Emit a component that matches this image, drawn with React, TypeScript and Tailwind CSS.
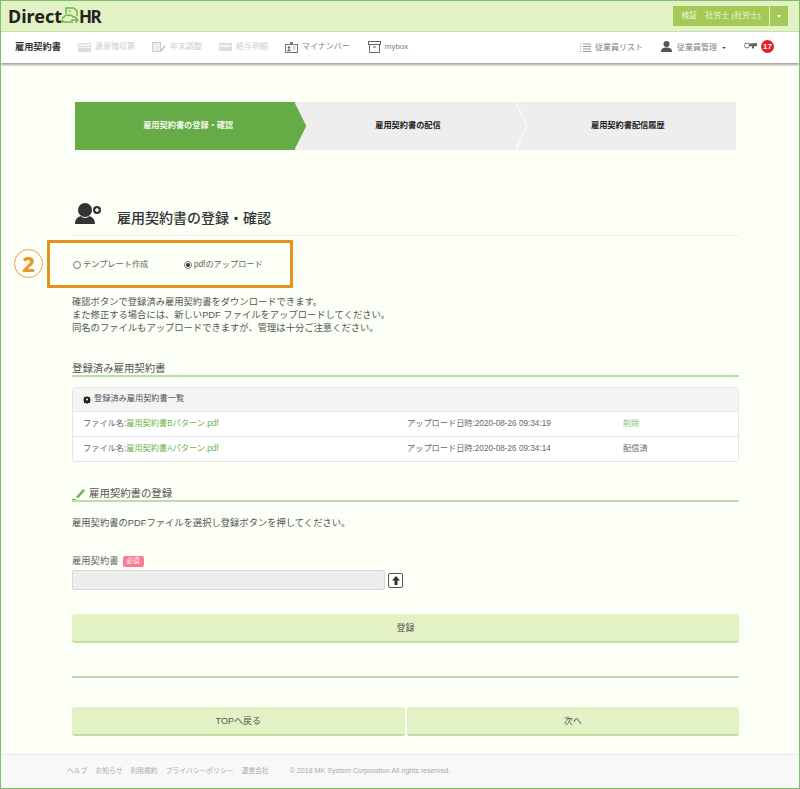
const font = { fontFamily: '"Liberation Sans", "Noto Sans CJK JP", sans-serif' };

function Logo() {
  return (
    <svg width="17" height="20" viewBox="0 0 17 20" fill="none">
      <path d="M4 8V2h8l3 3v5" stroke="#6fb54f" strokeWidth="1.5" />
      <path d="M6 4h3v2H6z" fill="#a9d68f" />
      <path d="M11 16H3a2.5 2.5 0 0 1-1-5 3 3 0 0 1 4-1.5 4 4 0 0 1 5 1.500h3" stroke="#6fb54f" strokeWidth="1.5" />
      <path d="M9 14h7M13.500 11.500l2.500 2.500-2.500 2.500" stroke="#6fb54f" strokeWidth="1.5" />
    </svg>
  );
}

function NavItem({ icon, label, muted }: { icon: React.ReactNode; label: string; muted?: boolean }) {
  return (
    <div className={`flex items-center gap-[4px] text-[8px] ${muted ? 'text-[#cdcdcd]' : 'text-[#808080]'}`}>
      {icon}
      <span>{label}</span>
    </div>
  );
}

function SectionTitle({ children }: { children: React.ReactNode }) {
  return (
    <div className="flex items-end border-b-2 border-[#bcdcaa] text-[10.4px] leading-[13px] text-[#555]">
      {children}
    </div>
  );
}

function FileRow({ name, date, action, link }: { name: string; date: string; action: string; link?: boolean }) {
  return (
    <div className="flex h-[25px] items-center border-t border-[#e6e6e6] bg-white pl-[10px] text-[8.2px] text-[#666]">
      <div className="w-[324px]">
        ファイル名:<span className="text-[#6fb54f]">{name}</span>
      </div>
      <div className="w-[216px]">アップロード日時:{date}</div>
      <div className={link ? 'text-[#8cc070]' : ''}>{action}</div>
    </div>
  );
}

function GreenButton({ label, className }: { label: string; className: string }) {
  return (
    <div className={`flex items-center justify-center rounded-[3px] border-b-2 border-[#c3dca0] bg-[#e3f2c5] pt-[2px] text-[9px] text-[#555] ${className}`}>
      {label}
    </div>
  );
}

export default function App() {
  return (
    <div style={font} className="relative flex h-[789px] w-[800px] flex-col overflow-hidden border border-[#7cc16a] bg-[#fbfff6]">
      {/* header */}
      <header className="flex h-[31px] shrink-0 items-center justify-between border-b border-[#c8dfa8] bg-[#e3f2c5] pl-[7px] pr-[11px]">
        <div className="flex items-center text-[18px] font-bold leading-none text-[#222]" style={{ fontFamily: '"Noto Sans", sans-serif' }}>
          <span>Direct</span>
          <Logo />
          <span className="text-[17px] tracking-[-1.5px]">HR</span>
        </div>
        <div className="flex h-[20px] gap-px text-[8px] text-[#eef6dc]">
          <div className="flex w-[96px] items-center justify-center bg-[#a5c956]">検証　社労士 (社労士)</div>
          <div className="flex w-[18px] items-center justify-center bg-[#a5c956]">
            <div className="h-0 w-0 border-x-[2.5px] border-t-[3px] border-x-transparent border-t-white" />
          </div>
        </div>
      </header>

      {/* nav */}
      <nav className="z-10 flex h-[31px] shrink-0 items-center justify-between bg-white pl-[14px] pr-[25px] shadow-[0_2px_2px_rgba(0,0,0,0.35)]">
        <div className="flex items-center">
          <span className="mr-[17px] text-[9.2px] font-bold text-[#333]">雇用契約書</span>
          <div className="flex items-center">
            <div className="mr-[17px]">
              <NavItem
                muted
                label="源泉徴収票"
                icon={
                  <svg width="13" height="9" viewBox="0 0 13 9">
                    <rect width="13" height="9" fill="#ddd" />
                    <rect x="1" y="1" width="11" height="2" fill="#f4f4f4" />
                    <rect x="1" y="4" width="11" height="1" fill="#f4f4f4" />
                  </svg>
                }
              />
            </div>
            <div className="mr-[17px]">
              <NavItem
                muted
                label="年末調整"
                icon={
                  <svg width="14" height="11" viewBox="0 0 14 11">
                    <rect x="0.5" y="0.5" width="8" height="9" fill="#eee" stroke="#ccc" />
                    <path d="M9 9l4-5" stroke="#bbb" strokeWidth="1.5" />
                  </svg>
                }
              />
            </div>
            <div className="mr-[17px]">
              <NavItem
                muted
                label="給与明細"
                icon={
                  <svg width="13" height="8" viewBox="0 0 13 8">
                    <rect width="13" height="8" fill="#ddd" />
                    <rect x="1" y="2" width="11" height="2" fill="#f4f4f4" />
                  </svg>
                }
              />
            </div>
            <div className="mr-[18px]">
              <NavItem
                label="マイナンバー"
                icon={
                  <svg width="13" height="11" viewBox="0 0 13 11" fill="none">
                    <rect x="0.5" y="2.5" width="12" height="8" stroke="#777" />
                    <rect x="5" y="0" width="3" height="3" fill="#777" />
                    <circle cx="4" cy="5.5" r="1.2" fill="#666" />
                    <path d="M2.5 9a1.500 1.500 0 0 1 3 0zM7.500 5h3M7.500 7h3" fill="#666" stroke="#666" strokeWidth="0.5" />
                  </svg>
                }
              />
            </div>
            <NavItem
              label="mybox"
              icon={
                <svg width="13" height="12" viewBox="0 0 13 12" fill="none">
                  <rect x="0.5" y="0.5" width="12" height="3" stroke="#666" />
                  <path d="M1.500 3.500v8h10v-8M5 6h3" stroke="#666" />
                </svg>
              }
            />
          </div>
        </div>
        <div className="flex items-center">
          <NavItem
            label="従業員リスト"
            icon={
              <svg width="11" height="10" viewBox="0 0 11 10" fill="none" stroke="#999">
                <path d="M0 1h1M3 1h8M0 3.500h1M3 3.500h8M0 6h1M3 6h8M0 8.500h1M3 8.500h8" />
              </svg>
            }
          />
          <div className="ml-[18px] flex items-center gap-[5px] text-[8px] text-[#808080]">
            <svg width="11" height="11" viewBox="0 0 11 11" fill="#555" className="mb-[3px]">
              <circle cx="5.5" cy="3" r="3" />
              <path d="M0 11c0-3.500 2-4.500 5.500-4.500S11 7.500 11 11z" />
            </svg>
            <span>従業員管理</span>
            <div className="h-0 w-0 border-x-[2px] border-t-[2px] border-x-transparent border-t-[#555]" />
          </div>
          <svg width="13" height="9" viewBox="0 0 13 9" fill="none" className="mb-[3px] ml-[18px]">
            <circle cx="3" cy="3.500" r="2.500" stroke="#777" />
            <path d="M5 1.500l8-.5v3l-3 .5v2H8v-2l-3-.5z" fill="#666" />
          </svg>
          <div className="mb-[2px] ml-[4px] flex h-[13px] w-[13px] items-center justify-center rounded-full bg-[#e01f26] text-[8px] font-bold text-white">17</div>
        </div>
      </nav>

      {/* content */}
      <main className="flex-1 pl-[71px] pr-[60px]">
        <div className="mx-[3px] mt-[39px] grid h-[48px] grid-cols-3 text-[8.2px] font-bold">
          <div className="relative flex items-center justify-center bg-[#65ac47] pl-[6px] pt-[1px] text-[#f2f8ea]">
            雇用契約書の登録・確認
            <div className="absolute left-[calc(100%-1px)] top-0 z-10 h-full w-[12px] bg-[#65ac47] [clip-path:polygon(0_0,100%_50%,0_100%)]" />
          </div>
          <div className="relative flex items-center justify-center bg-[#eeeeee] pl-[5px] pt-[1px] text-[#222]">
            雇用契約書の配信
            <svg width="12" height="48" viewBox="0 0 12 48" fill="none" className="absolute left-full top-0 z-10">
              <path d="M0 0l11 24L0 48" stroke="#fff" />
            </svg>
          </div>
          <div className="flex items-center justify-center bg-[#eeeeee] pl-[4px] pt-[1px] text-[#222]">雇用契約書配信履歴</div>
        </div>

        <div className="mt-[49px] flex h-[37px] items-end border-b border-[#f0f0ea] pb-[8px]">
          <svg width="28" height="22" viewBox="0 0 28 22" fill="#333" className="mb-[2px] ml-[3px]">
            <circle cx="10" cy="7" r="7" />
            <path d="M0 21c0-5 3-7 5.500-8 3 2.500 6 2.500 9 0 2.500 1 5.500 3 5.500 8z" />
            <circle cx="22" cy="7" r="4" />
            <path d="M20 7h4M22 5v4" stroke="#fff" strokeWidth="1.5" />
          </svg>
          <h1 className="ml-[14px] text-[14px] font-medium leading-[18px] text-[#333]">雇用契約書の登録・確認</h1>
        </div>

        <div className="mt-[22px] flex h-[14px] items-center pl-[1px] text-[8.2px] text-[#666]">
          <label className="flex w-[111px] items-center gap-[2px]">
            <span className="h-[8px] w-[8px] rounded-full border border-[#777] bg-white" />
            テンプレート作成
          </label>
          <label className="flex items-center gap-[2px]">
            <span className="flex h-[8px] w-[8px] items-center justify-center rounded-full border border-[#777] bg-white">
              <span className="h-[4px] w-[4px] rounded-full bg-[#333]" />
            </span>
            pdfのアップロード
          </label>
        </div>

        <div className="mt-[24px] text-[9.3px] leading-[13px] text-[#555]">
          <p>確認ボタンで登録済み雇用契約書をダウンロードできます。</p>
          <p>また修正する場合には、新しいPDF ファイルをアップロードしてください。</p>
          <p>同名のファイルもアップロードできますが、管理は十分ご注意ください。</p>
        </div>

        <div className="mt-[27px]">
          <SectionTitle>登録済み雇用契約書</SectionTitle>
        </div>

        <div className="mt-[10px] overflow-hidden rounded-[3px] border border-[#e6e6e6]">
          <div className="flex h-[23px] items-center gap-[3px] bg-[#f4f4f4] pl-[10px] text-[8.2px] text-[#555]">
            <svg width="8" height="8" viewBox="0 0 8 8" fill="#222">
              <path d="M4 0l1 1h2v2l1 1-1 1v2H5L4 8 3 7H1V5L0 4l1-1V1h2z" />
              <circle cx="4" cy="3.5" r="1" fill="#fff" />
            </svg>
            登録済み雇用契約書一覧
          </div>
          <FileRow name="雇用契約書Bパターン.pdf" date="2020-08-26 09:34:19" action="削除" link />
          <FileRow name="雇用契約書Aパターン.pdf" date="2020-08-26 09:34:14" action="配信済" />
        </div>

        <div className="mt-[25px]">
          <SectionTitle>
            <svg width="15" height="13" viewBox="0 0 15 13" fill="none" className="mr-[2px]">
              <path d="M4 10l7-8 2 1.500-7 8z" fill="#6fb54f" />
              <path d="M0 12.500h4" stroke="#6fb54f" />
            </svg>
            雇用契約書の登録
          </SectionTitle>
        </div>

        <p className="mt-[15px] text-[9.3px] leading-[13px] text-[#555]">雇用契約書のPDFファイルを選択し登録ボタンを押してください。</p>

        <div className="mt-[25px] flex items-center gap-[4px] text-[9.3px] leading-[12px] text-[#666]">
          雇用契約書
          <span className="flex h-[11px] w-[21px] items-center justify-center rounded-[2px] bg-[#fb7a95] text-[6.5px] text-white">必須</span>
        </div>
        <div className="mt-[3px] flex items-center gap-[3px]">
          <div className="h-[20px] w-[313px] rounded-[2px] border border-[#d8d8d8] bg-[#eeeeee]" />
          <div className="flex h-[15px] w-[15px] items-center justify-center rounded-[2px] border border-[#555] bg-white">
            <svg width="8" height="9" viewBox="0 0 8 9" fill="#333">
              <path d="M4 0l4 4.500H5.500V9h-3V4.500H0z" />
            </svg>
          </div>
        </div>

        <GreenButton label="登録" className="mt-[24px] h-[29px]" />

        <div className="mt-[33px] border-t-2 border-[#bcdcaa]" />

        <div className="mt-[29px] flex gap-[2px]">
          <GreenButton label="TOPへ戻る" className="h-[29px] flex-1" />
          <GreenButton label="次へ" className="h-[29px] flex-1" />
        </div>
      </main>

      {/* footer */}
      <footer className="flex h-[34px] shrink-0 items-center border-t border-[#e8e8e8] bg-[#f8f8f8] pl-[66px] text-[6.8px] text-[#aaa]">
        <span className="mr-[8px]">ヘルプ</span>
        <span className="mr-[8px]">お知らせ</span>
        <span className="mr-[8px]">利用規約</span>
        <span className="mr-[8px]">プライバシーポリシー</span>
        <span className="mr-[21px]">運営会社</span>
        <span className="text-[7.1px]">© 2018 MK System Corporation All rights reserved.</span>
      </footer>

      {/* annotation frame */}
      <div className="absolute left-[46px] top-[239px] h-[48px] w-[246px] border-[3px] border-[#e5931f]" />
      <div className="absolute left-[13px] top-[248px] flex h-[29px] w-[29px] items-center justify-center rounded-full border border-[#e8a04a] text-[22px] font-extrabold text-[#e8982f]" style={{ fontFamily: '"Noto Sans", sans-serif' }}>2</div>
    </div>
  );
}
